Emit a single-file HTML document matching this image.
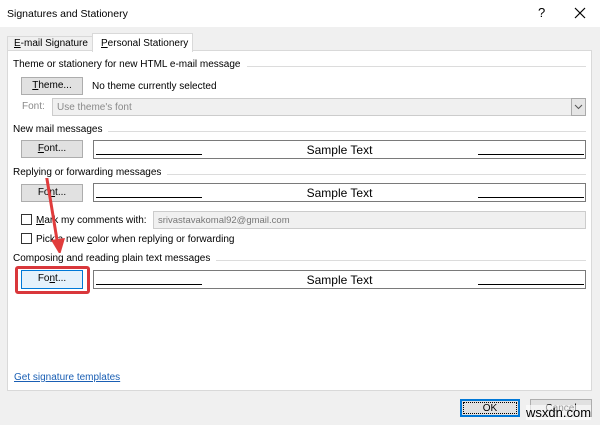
<!DOCTYPE html>
<html><head><style>
*{margin:0;padding:0;box-sizing:border-box}
body{width:600px;height:425px;background:#f0f0f0;font-family:"Liberation Sans","DejaVu Sans",sans-serif;font-size:10px;color:#000;position:relative;overflow:hidden}
.a{position:absolute;white-space:nowrap}
.btn{position:absolute;background:#e1e1e1;border:1px solid #adadad;text-align:center;line-height:16px}
.grp{position:absolute;left:13px;right:14px;height:12px}
.grp span{background:#fff;padding-right:6px;position:relative;z-index:1}
.grp:after{content:"";position:absolute;left:0;right:0;top:7px;border-top:1px solid #dcdcdc}
.box{position:absolute;left:93px;width:493px;height:19px;border:1px solid #7a7a7a;background:#fff}
.box .l1{position:absolute;left:2px;width:106px;bottom:3px;border-top:1px solid #000}
.box .l2{position:absolute;right:1px;width:106px;bottom:3px;border-top:1px solid #000}
.box .t{position:absolute;left:0;right:0;text-align:center;top:2px;font-size:12px}
.cb{position:absolute;width:11px;height:11px;border:1px solid #333;background:#fff}
u{text-decoration:underline}
</style></head><body>
<div class="a" style="left:0;top:0;width:600px;height:27px;background:#fff"></div>
<div class="a" style="left:7px;top:8px;font-size:10.5px">Signatures and Stationery</div>
<div class="a" style="left:538px;top:5px;font-size:13px">?</div>
<svg class="a" style="left:574px;top:7px" width="12" height="12"><path d="M1 1L11 11M11 1L1 11" stroke="#000" stroke-width="1.2"/></svg>
<div class="a" style="left:7px;top:36px;width:86px;height:15px;border:1px solid #d9d9d9;border-bottom:none;background:#f0f0f0;padding-left:6px;line-height:14px"><u>E</u>-mail Signature</div>
<div class="a" style="left:7px;top:50px;width:585px;height:341px;background:#fff;border:1px solid #d9d9d9"></div>
<div class="a" style="left:92px;top:33px;width:101px;height:19px;background:#fff;border:1px solid #d9d9d9;border-bottom:none;padding-left:8px;line-height:19px"><u>P</u>ersonal Stationery</div>
<div class="grp" style="top:59px"><span>Theme or stationery for new HTML e-mail message</span></div>
<div class="btn" style="left:21px;top:77px;width:62px;height:18px"><u>T</u>heme...</div>
<div class="a" style="left:92px;top:81px">No theme currently selected</div>
<div class="a" style="left:22px;top:101px;color:#8a8a8a">Font:</div>
<div class="a" style="left:52px;top:98px;width:534px;height:18px;background:#f0f0f0;border:1px solid #ccc;color:#8a8a8a;padding:3px 0 0 4px">Use theme's font</div>
<div class="a" style="left:571px;top:98px;width:15px;height:18px;border:1px solid #aaa;background:#e5e5e5"><svg width="13" height="16"><path d="M3 6L6.5 9.5L10 6" stroke="#555" fill="none"/></svg></div>
<div class="grp" style="top:124px"><span>New mail messages</span></div>
<div class="btn" style="left:21px;top:140px;width:62px;height:18px"><u>F</u>ont...</div>
<div class="box" style="top:140px"><div class="l1"></div><div class="l2"></div><div class="t">Sample Text</div></div>
<div class="grp" style="top:167px"><span>Replying or forwarding messages</span></div>
<div class="btn" style="left:21px;top:184px;width:62px;height:18px">Fo<u>n</u>t...</div>
<div class="box" style="top:183px"><div class="l1"></div><div class="l2"></div><div class="t">Sample Text</div></div>
<div class="cb" style="left:21px;top:214px"></div>
<div class="a" style="left:36px;top:215px"><u>M</u>ark my comments with:</div>
<div class="a" style="left:153px;top:211px;width:433px;height:18px;background:#f0f0f0;border:1px solid #ccc;color:#777;padding:3px 0 0 4px;font-size:9.5px">srivastavakomal92@gmail.com</div>
<div class="cb" style="left:21px;top:233px"></div>
<div class="a" style="left:36px;top:234px">Pick a new <u>c</u>olor when replying or forwarding</div>
<div class="grp" style="top:253px"><span>Composing and reading plain text messages</span></div>
<div class="a" style="left:15px;top:266px;width:75px;height:28px;border:3px solid #d9373b;border-radius:3px"></div>
<div class="btn" style="left:21px;top:270px;width:62px;height:19px;background:#e5f1fb;border-color:#0078d7">Fo<u>n</u>t...</div>
<div class="box" style="top:270px"><div class="l1"></div><div class="l2"></div><div class="t">Sample Text</div></div>
<svg class="a" style="left:0;top:160px" width="100" height="110"><path d="M46 13L58 86" stroke="#e03c3c" stroke-width="3"/><path d="M51 80L60 95L65 78Z" fill="#e03c3c"/></svg>
<div class="a" style="left:14px;top:372px;color:#1a5fb4;text-decoration:underline">Get signature templates</div>
<div class="btn" style="left:460px;top:399px;width:60px;height:18px;border:2px solid #0078d7;outline:1px dotted #000;outline-offset:-4px;line-height:15px">OK</div>
<div class="btn" style="left:530px;top:399px;width:62px;height:18px;line-height:17px">Cancel</div>
<div class="a" style="left:526px;top:405px;font-size:13px;color:#000;background:rgba(255,255,255,.6)">wsxdn.com</div>
</body></html>
